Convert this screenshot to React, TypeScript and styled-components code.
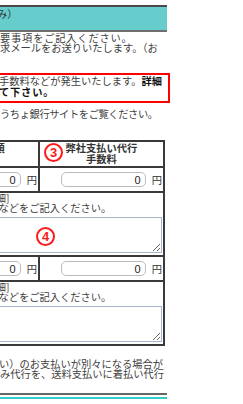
import React from 'react';
import styled, { createGlobalStyle } from 'styled-components';

const GlobalStyle = createGlobalStyle`
  html, body {
    margin: 0;
    padding: 0;
    background: #ffffff;
    overflow: hidden;
  }
  body {
    font-family: "Noto Sans CJK JP", "Noto Sans", sans-serif;
    font-size: 10.25px;
    color: #404040;
  }
`;

const Page = styled.div`
  width: 167px;
  padding-top: 5px;
`;

const SectionBar = styled.div`
  box-sizing: border-box;
  height: 27px;
  padding-top: 2px;
  background: #66cccc;
  border-top: 2px solid #4a4a4a;
  border-bottom: 2px solid #6e6e6e;
  line-height: 10px;
  color: #333;
`;

const Para = styled.div<{ $gap: number }>`
  margin-top: ${({ $gap }) => $gap}px;
  line-height: 10px;
`;

const Line = styled.span<{ $track?: number; $shift?: number }>`
  display: block;
  white-space: nowrap;
  letter-spacing: ${({ $track }) => $track ?? 0}px;
  margin-left: ${({ $shift }) => $shift ?? 0}px;
`;

const Notice = styled.div`
  margin: 20px -3px 0 -4px;
  padding: 1px 0 4px 1px;
  border: 2px solid #ff0000;
  line-height: 10.5px;
`;

const Strong = styled.b`
  color: #111;
  font-weight: 700;
`;

const FeeTable = styled.div`
  display: grid;
  grid-template-columns: 99px 125px;
  margin: 21px 0 0 -61px;
  width: max-content;
  border: 1px solid #3a3a3a;
`;

const HeadCell = styled.div`
  position: relative;
  box-sizing: border-box;
  height: 26px;
  border: 1px solid #3a3a3a;
  font-weight: 700;
  color: #333;
  line-height: 11px;
  text-align: center;
`;

const AmountCell = styled.div`
  box-sizing: border-box;
  height: 25px;
  border: 1px solid #3a3a3a;
  padding-right: 1px;
  display: flex;
  align-items: center;
  justify-content: flex-end;
  gap: 6px;
  color: #333;
`;

const AmountInput = styled.input<{ $width: number }>`
  box-sizing: border-box;
  width: ${({ $width }) => $width}px;
  height: 15px;
  margin: 0;
  padding: 0 4px 0 2px;
  border: 1px solid #bcbcbc;
  border-radius: 5px;
  background: #ffffff;
  text-align: right;
  font: 11px "Liberation Sans", Arial, sans-serif;
  color: #222;
  outline: none;
`;

const DetailCell = styled.div`
  grid-column: 1 / -1;
  box-sizing: border-box;
  height: 64px;
  border: 1px solid #3a3a3a;
  padding: 0 1px 2px 0;
  line-height: 10px;
`;

const NoteField = styled.div`
  position: relative;
  margin-top: 4px;
`;

const NoteBox = styled.textarea`
  display: block;
  box-sizing: border-box;
  width: 100%;
  height: 36px;
  margin: 0;
  padding: 2px;
  border: 1px solid #a6b6ca;
  background: #ffffff;
  font: inherit;
  outline: none;
`;

const Badge = styled.span<{ $top: number; $left?: number; $right?: number }>`
  position: absolute;
  top: ${({ $top }) => $top}px;
  ${({ $left }) => ($left !== undefined ? `left: ${$left}px;` : '')}
  ${({ $right }) => ($right !== undefined ? `right: ${$right}px;` : '')}
  box-sizing: border-box;
  width: 19px;
  height: 19px;
  border: 2px solid #ff1a1a;
  border-radius: 50%;
  color: #ff1a1a;
  font: 700 13px/15px "Liberation Sans", Arial, sans-serif;
  text-align: center;
  pointer-events: none;
`;

const FooterRule = styled.div`
  margin-top: 14px;
  height: 2px;
  border-top: 2px solid #666666;
  border-bottom: 2px solid #33cccc;
`;

const details = ['商品代金', '送料代金'];

export default function App() {
  return (
    <>
      <GlobalStyle />
      <Page>
        <SectionBar>
          <Line $shift={-3}>み）</Line>
        </SectionBar>

        <Para $gap={1}>
          <Line $track={0.8}>要事項をご記入ください。</Line>
          <Line>求メールをお送りいたします。（お</Line>
        </Para>

        <Notice>
          <Line>
            手数料などが発生いたします。<Strong>詳細</Strong>
          </Line>
          <Line $track={0.8}>
            <Strong>て下さい。</Strong>
          </Line>
        </Notice>

        <Para $gap={6}>
          <Line $track={-0.4}>うちょ銀行サイトをご覧ください。</Line>
        </Para>

        <FeeTable>
          <HeadCell>振込額</HeadCell>
          <HeadCell>
            <Badge $top={1} $left={4}>3</Badge>
            弊社支払い代行
            <br />
            手数料
          </HeadCell>

          {details.map((label) => (
            <React.Fragment key={label}>
              <AmountCell>
                <AmountInput $width={70} defaultValue="0" />
                円
              </AmountCell>
              <AmountCell>
                <AmountInput $width={85} defaultValue="0" />
                円
              </AmountCell>
              <DetailCell>
                <Line>{label}[明細]</Line>
                <Line $shift={-4}>商品名・数量などをご記入ください。</Line>
                <NoteField>
                  <NoteBox />
                  {label === '商品代金' && (
                    <Badge $top={10} $right={107}>4</Badge>
                  )}
                </NoteField>
              </DetailCell>
            </React.Fragment>
          ))}
        </FeeTable>

        <Para $gap={13}>
          <Line $shift={-1}>い）のお支払いが別々になる場合が</Line>
          <Line>み代行を、送料支払いに着払い代行</Line>
        </Para>

        <FooterRule />
      </Page>
    </>
  );
}
